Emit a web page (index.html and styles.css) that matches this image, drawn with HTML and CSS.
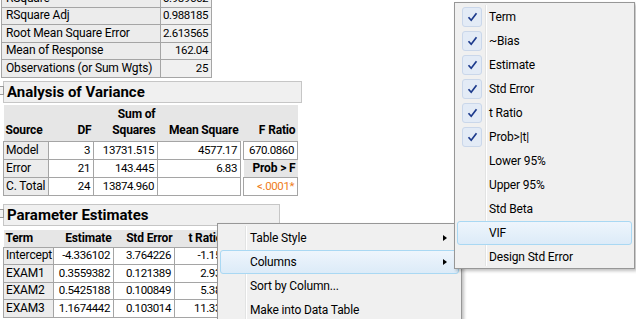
FILE: index.html
```html
<!DOCTYPE html>
<html>
<head>
<meta charset="utf-8">
<link rel="stylesheet" href="styles.css">
</head>
<body>
<div class="report">
  <table class="fit">
    <colgroup><col class="w-lbl"><col class="w-val"></colgroup>
    <tr><td class="lbl">RSquare</td><td class="val">0.989662</td></tr>
    <tr><td class="lbl">RSquare Adj</td><td class="val">0.988185</td></tr>
    <tr><td class="lbl">Root Mean Square Error</td><td class="val">2.613565</td></tr>
    <tr><td class="lbl">Mean of Response</td><td class="val">162.04</td></tr>
    <tr><td class="lbl">Observations (or Sum Wgts)</td><td class="val">25</td></tr>
  </table>

  <div class="outline anova-title">Analysis of Variance</div>
  <table class="anova">
    <colgroup><col class="a1"><col class="a2"><col class="a3"><col class="a4"><col class="a5"><col class="a6"></colgroup>
    <tr class="hdr">
      <th class="c-src">&nbsp;<br>Source</th>
      <th>&nbsp;<br>DF</th>
      <th>Sum of<br>Squares</th>
      <th>&nbsp;<br>Mean Square</th>
      <th class="c-gap"></th>
      <th>&nbsp;<br>F Ratio</th>
    </tr>
    <tr>
      <td class="src">Model</td><td class="num">3</td><td class="num">13731.515</td><td class="num">4577.17</td><td class="gap"></td><td class="num">670.0860</td>
    </tr>
    <tr>
      <td class="src">Error</td><td class="num">21</td><td class="num">143.445</td><td class="num">6.83</td><td class="gap"></td><td class="probh">Prob &gt; F</td>
    </tr>
    <tr>
      <td class="src">C. Total</td><td class="num">24</td><td class="num">13874.960</td><td class="num"></td><td class="gap"></td><td class="num sig">&lt;.0001*</td>
    </tr>
  </table>

  <div class="outline pe-title">Parameter Estimates</div>
  <table class="pe">
    <colgroup><col class="p1"><col class="p2"><col class="p3"><col class="p4"></colgroup>
    <tr class="hdr">
      <th class="p-term">Term</th><th>Estimate</th><th>Std Error</th><th>t Ratio</th>
    </tr>
    <tr><td class="src">Intercept</td><td class="num">-4.336102</td><td class="num">3.764226</td><td class="num">-1.15</td></tr>
    <tr><td class="src">EXAM1</td><td class="num">0.3559382</td><td class="num">0.121389</td><td class="num">2.93</td></tr>
    <tr><td class="src">EXAM2</td><td class="num">0.5425188</td><td class="num">0.100849</td><td class="num">5.38</td></tr>
    <tr><td class="src">EXAM3</td><td class="num">1.1674442</td><td class="num">0.103014</td><td class="num">11.33</td></tr>
  </table>

  <div class="outline closed-title">Effect Tests</div>
</div>

<div class="menu main-menu">
  <div class="item">Table Style<span class="arrow"></span></div>
  <div class="item hot">Columns<span class="arrow"></span></div>
  <div class="item">Sort by Column...</div>
  <div class="item">Make into Data Table</div>
</div>

<div class="menu sub-menu">
  <div class="item"><span class="chk"><svg width="11" height="10" viewBox="0 0 11 10"><path d="M1.5 5.2 L4.2 8.2 L9.5 1.2" fill="none" stroke="#1c3a8c" stroke-width="1.7"/></svg></span>Term</div>
  <div class="item"><span class="chk"><svg width="11" height="10" viewBox="0 0 11 10"><path d="M1.5 5.2 L4.2 8.2 L9.5 1.2" fill="none" stroke="#1c3a8c" stroke-width="1.7"/></svg></span>~Bias</div>
  <div class="item"><span class="chk"><svg width="11" height="10" viewBox="0 0 11 10"><path d="M1.5 5.2 L4.2 8.2 L9.5 1.2" fill="none" stroke="#1c3a8c" stroke-width="1.7"/></svg></span>Estimate</div>
  <div class="item"><span class="chk"><svg width="11" height="10" viewBox="0 0 11 10"><path d="M1.5 5.2 L4.2 8.2 L9.5 1.2" fill="none" stroke="#1c3a8c" stroke-width="1.7"/></svg></span>Std Error</div>
  <div class="item"><span class="chk"><svg width="11" height="10" viewBox="0 0 11 10"><path d="M1.5 5.2 L4.2 8.2 L9.5 1.2" fill="none" stroke="#1c3a8c" stroke-width="1.7"/></svg></span>t Ratio</div>
  <div class="item"><span class="chk"><svg width="11" height="10" viewBox="0 0 11 10"><path d="M1.5 5.2 L4.2 8.2 L9.5 1.2" fill="none" stroke="#1c3a8c" stroke-width="1.7"/></svg></span>Prob&gt;|t|</div>
  <div class="item">Lower 95%</div>
  <div class="item">Upper 95%</div>
  <div class="item">Std Beta</div>
  <div class="item hot">VIF</div>
  <div class="item">Design Std Error</div>
</div>
</body>
</html>
```

FILE: styles.css
```css
html, body {
  margin: 0;
  padding: 0;
}
body {
  width: 636px;
  height: 319px;
  overflow: hidden;
  position: relative;
  background: #fff;
  font-family: Roboto, "Liberation Sans", sans-serif;
  font-size: 12px;
  letter-spacing: -0.15px;
  color: #000;
}

.report {
  padding-left: 3px;
  margin-top: -11px;
}

table {
  border-collapse: collapse;
  border-spacing: 0;
  table-layout: fixed;
}
td, th {
  padding: 0 2px;
  white-space: nowrap;
  overflow: hidden;
  line-height: 15px;
}

/* Summary of fit */
.fit {
  margin-left: -2px;
  width: 210px;
}
.w-lbl { width: 159px; }
.w-val { width: 51px; }
.fit tr {
  height: 17.5px;
}
.fit td {
  border: 1px solid #a5a5a5;
  background: #ececec;
}
.fit .lbl {
  padding-left: 4px;
}
.fit .val {
  text-align: right;
  background: #f0f0f0;
  padding-right: 3px;
}

.val,
.num {
  font-size: 11.5px;
  letter-spacing: -0.4px;
}

/* outline headers */
.outline {
  box-sizing: border-box;
  height: 22px;
  background: #f0f0f0;
  border: 1px solid #c6c6c6;
  font-weight: bold;
  font-size: 15px;
  letter-spacing: 0;
  line-height: 20px;
  padding-left: 3px;
  position: relative;
}
.outline::before {
  content: "";
  position: absolute;
  left: -9px;
  top: 4px;
  width: 7px;
  height: 7px;
  border: 1px solid #9a9a9a;
  background: #f4f4f4;
}
.anova-title {
  margin-top: 3px;
  width: 299px;
}
.pe-title {
  margin-top: 8px;
  width: 277px;
}
.closed-title {
  margin-top: 4px;
  width: 97px;
}

/* ANOVA */
.anova {
  margin-top: 2px;
  width: 294px;
}
.a1 { width: 45px; }
.a2 { width: 45px; }
.a3 { width: 64px; }
.a4 { width: 83px; }
.a5 { width: 3px; }
.a6 { width: 54px; }
.anova .hdr th {
  background: #e6e6e6;
  font-weight: bold;
  text-align: right;
  vertical-align: bottom;
  line-height: 16px;
  padding-bottom: 3px;
  padding-top: 1px;
}
.anova .hdr .c-src {
  text-align: left;
}
.anova .c-gap,
.gap {
  padding: 0;
  border: none;
}
.anova tr {
  height: 18px;
}
.src {
  border: 1px solid #a5a5a5;
  background: #ececec;
}
.num {
  border: 1px solid #a5a5a5;
  background: #fff;
  text-align: right;
  padding-right: 3px;
}
.gap {
  background: #fff;
}
.probh {
  background: #e6e6e6;
  font-weight: bold;
  text-align: right;
  border: none;
}
.sig {
  color: #ef7d1a;
}

/* Parameter estimates */
.pe {
  margin-top: 4px;
  width: 221px;
}
.p1 { width: 50px; }
.p2 { width: 60px; }
.p3 { width: 61px; }
.p4 { width: 50px; }
.pe tr {
  height: 17.5px;
}
.pe .hdr th {
  background: #e6e6e6;
  font-weight: bold;
  text-align: right;
  height: 16px;
}
.pe .hdr .p-term {
  text-align: left;
}

/* Menus */
.menu {
  position: absolute;
  box-sizing: border-box;
  background: #f0f0f0;
  border: 1px solid #979797;
  box-shadow: 2px 2px 3px rgba(0, 0, 0, 0.25);
  font-size: 12px;
  padding: 2px;
}
.menu .item {
  position: relative;
  height: 24px;
  line-height: 22px;
  box-sizing: border-box;
  border: 1px solid transparent;
  border-radius: 3px;
  padding-left: 29px;
  display: flex;
  align-items: center;
}
.menu .item.hot {
  border-color: #a9d8f3;
  background: linear-gradient(#eef5fc, #dcebf8);
}
.main-menu {
  left: 217px;
  top: 223px;
  width: 245px;
  height: 110px;
}
.main-menu::before,
.sub-menu::before {
  content: "";
  position: absolute;
  top: 2px;
  bottom: 2px;
  width: 1px;
  background: #e2e3e3;
  box-shadow: 1px 0 0 #fff;
}
.main-menu::before {
  left: 27px;
}
.arrow {
  position: absolute;
  right: 11px;
  top: 8px;
  width: 0;
  height: 0;
  border-top: 3.5px solid transparent;
  border-bottom: 3.5px solid transparent;
  border-left: 4px solid #000;
}

.sub-menu {
  left: 454px;
  top: 2px;
  width: 181px;
  height: 267px;
}
.sub-menu::before {
  left: 30px;
}
.sub-menu .item {
  padding-left: 31px;
}
.chk {
  position: absolute;
  left: 4px;
  top: 1px;
  width: 20px;
  height: 20px;
  box-sizing: border-box;
  border: 1px solid #cad7ea;
  border-radius: 3px;
  background: #e3ebf6;
  display: flex;
  align-items: center;
  justify-content: center;
}
```
